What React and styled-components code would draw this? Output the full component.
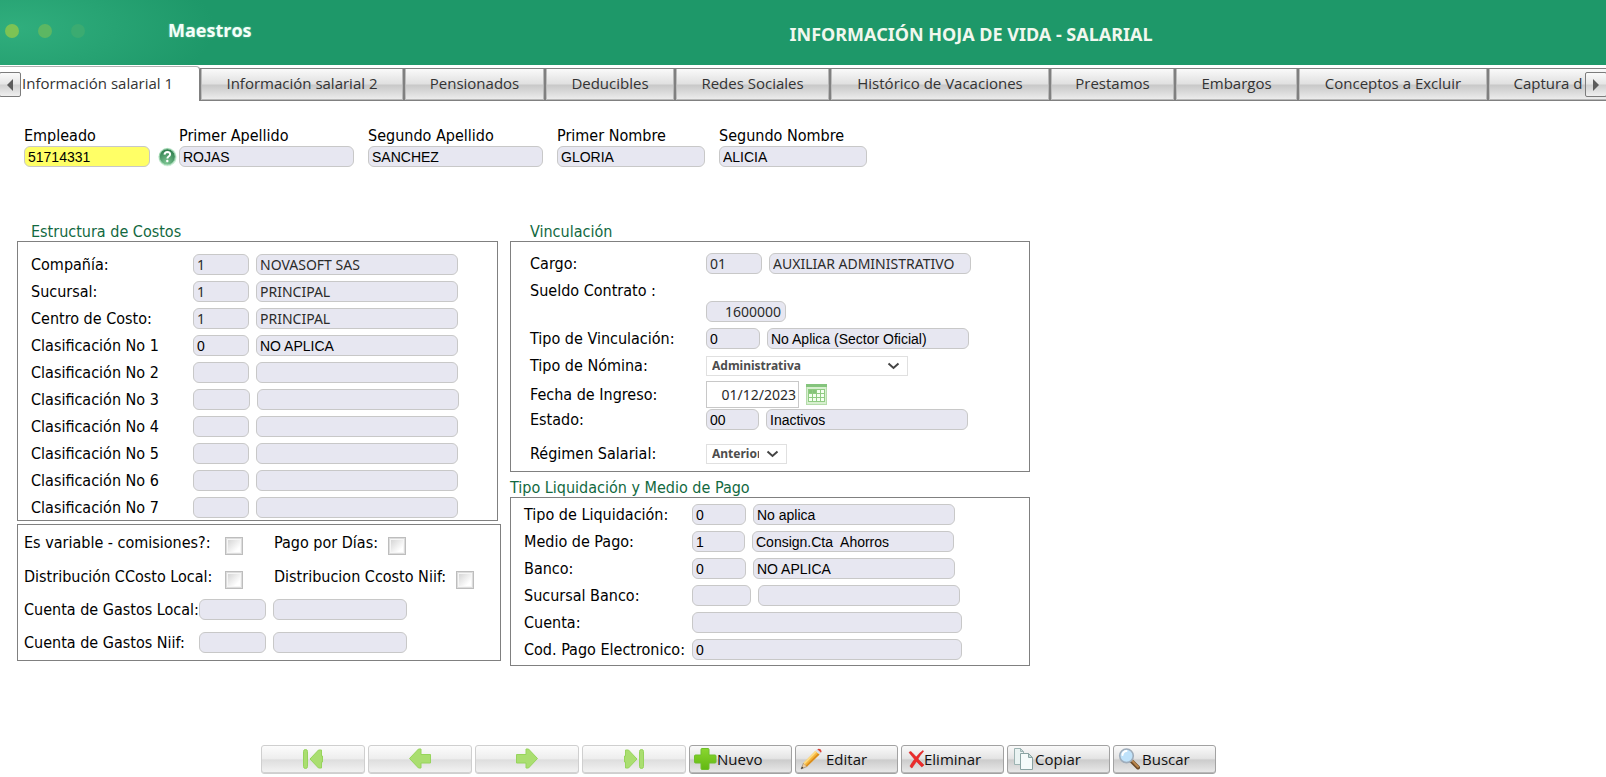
import * as React from 'react';
import styled, { createGlobalStyle } from 'styled-components';

const GlobalStyle = createGlobalStyle`
  *, *::before, *::after {
    box-sizing: border-box;
  }

  body {
    margin: 0;
    background: #ffffff;
    color: #000000;
    font-family: 'DejaVu Sans Condensed', 'Noto Sans', sans-serif;
    font-size: 16px;
    overflow-x: hidden;
  }
`;

const Header = styled.header`
  display: flex;
  align-items: center;
  height: 65px;
  padding-left: 5px;
  background:
    radial-gradient(ellipse 200px 75px at 15px 28px, #30ae7d 0%, rgba(48, 174, 125, 0) 100%),
    #1e9869;
`;

const Dots = styled.svg`
  display: block;
  flex: none;
  width: 163px;
  height: 65px;
`;

const Brand = styled.span`
  flex: 1;
  padding-bottom: 5px;
  font-family: 'Open Sans', sans-serif;
  font-size: 18px;
  font-weight: 700;
  color: #f4fff9;
  text-shadow: 0 0 2px rgba(255, 255, 255, 0.4);
`;

const PageTitle = styled.h1`
  flex: 0 0 51%;
  margin: 0;
  padding-top: 3px;
  font-family: 'Noto Sans', sans-serif;
  font-size: 18px;
  line-height: 24px;
  color: #f1f7ee;
`;

const TabStrip = styled.nav`
  position: relative;
  display: flex;
  align-items: flex-end;
  height: 36px;
  overflow: hidden;
`;

const Tab = styled.button`
  flex: none;
  width: ${(props) => props.$width}px;
  height: ${(props) => (props.$active ? 35 : 33)}px;
  padding: ${(props) => (props.$active ? '0 0 2px 22px' : '0 0 4px')};
  border: ${(props) => (props.$active ? '0' : '1px solid #808080')};
  border-top: 1px solid ${(props) => (props.$active ? '#b0b0b0' : '#808080')};
  border-right: 1px solid #808080;
  border-radius: ${(props) => (props.$active ? '0 4px 0 0' : '0')};
  background: ${(props) =>
    props.$active ? '#ffffff' : 'linear-gradient(#fafafa 0%, #e0e0e0 48%, #c8c8c8 52%, #eeeeee 100%)'};
  box-shadow: ${(props) => (props.$active ? 'none' : 'inset 1px 0 0 #bdbdbd, inset -1px -1px 0 #b8b8b8')};
  font-family: 'Open Sans', sans-serif;
  font-size: 15px;
  color: #333333;
  text-align: ${(props) => (props.$active ? 'left' : 'center')};
  white-space: nowrap;
`;

const ScrollButton = styled.button`
  position: absolute;
  top: 7px;
  ${(props) => props.$side}: -1px;
  display: flex;
  align-items: center;
  justify-content: center;
  width: 22px;
  height: 25px;
  padding: 0;
  border: 1px solid #7c7c7c;
  border-radius: 2px;
  background: linear-gradient(#fafafa 0%, #e6e6e6 48%, #d0d0d0 52%, #efefef 100%);
`;

const Content = styled.main`
  padding: 24px 16px 0 17px;
`;

const EmployeeRow = styled.section`
  display: flex;
  flex-wrap: wrap;
  gap: 14px;
  padding-left: 7px;
`;

const EmployeeField = styled.div`
  flex: 0 1 ${(props) => props.$width}px;
`;

const KeyField = styled.div`
  flex: none;
  margin-right: -12px;
`;

const FieldLine = styled.div`
  display: flex;
  align-items: center;
  gap: 8px;
`;

const Label = styled.label`
  display: block;
  line-height: 21px;
  white-space: nowrap;
`;

const Input = styled.input`
  display: block;
  flex: 0 1 ${(props) => props.$width}px;
  width: ${(props) => (props.$width ? `${props.$width}px` : '100%')};
  min-width: 0;
  height: 21px;
  padding: ${(props) => (props.$plain ? '0 4px 1px 3px' : '1px 4px 0 3px')};
  border: 1px solid #c8c8c8;
  border-radius: 6px;
  background: ${(props) => (props.$highlight ? '#ffff66' : '#e7e7f1')};
  font-family: ${(props) => (props.$plain ? "'Noto Sans'" : "'Liberation Sans'")}, sans-serif;
  font-size: 14px;
  color: ${(props) => (props.$plain ? '#2b2b2b' : '#000000')};
  text-align: ${(props) => props.$align || 'left'};
  outline: none;
`;

const DateInput = styled(Input)`
  height: 27px;
  padding: 0 2px 0 0;
  border-radius: 0;
  background: #ffffff;
`;

const Columns = styled.div`
  display: flex;
  flex-wrap: wrap;
  align-items: flex-start;
  gap: 9px;
  margin-top: 52px;
`;

const Column = styled.div`
  flex: 0 1 ${(props) => props.$width}px;
  min-width: 0;
`;

const SectionTitle = styled.h2`
  margin: 0;
  padding-left: ${(props) => props.$indent}px;
  padding-top: ${(props) => props.$gap || 4}px;
  font-size: 16px;
  font-weight: 400;
  line-height: 18px;
  color: #12693f;
`;

const Panel = styled.section`
  display: flex;
  flex-direction: column;
  gap: ${(props) => props.$gap || 0}px;
  margin-right: ${(props) => props.$inset || 0}px;
  padding: ${(props) => props.$padding};
  border: 1px solid #808080;
`;

const CostPanel = styled(Panel)`
  margin-top: 3px;
`;

const Row = styled.div`
  display: flex;
  align-items: center;
  gap: 7px;
  min-height: ${(props) => props.$height || 21}px;
  margin-top: ${(props) => props.$top || 0}px;

  > label:first-child {
    flex: none;
    width: ${(props) => props.$label}px;
    margin-right: -7px;
  }
`;

const SalaryRow = styled(Row)`
  align-items: flex-start;
  padding-top: 3px;

  > input {
    margin-top: 21px;
  }
`;

const CheckGroup = styled.div`
  display: flex;
  align-items: center;
  gap: 10px;
  margin-left: 24px;
`;

const Checkbox = styled.input.attrs({ type: 'checkbox' })`
  flex: none;
  appearance: none;
  width: 18px;
  height: 18px;
  margin: 8px 0 0;
  border: 1px solid #bdbdbd;
  outline: 1px solid #dcdcdc;
  outline-offset: -2px;
  background: linear-gradient(135deg, #d6d6d6, #ffffff 80%) center / 12px 12px no-repeat #f6f6f6;
`;

const SelectBox = styled.div`
  position: relative;
  flex: 0 1 ${(props) => props.$width}px;
`;

const Select = styled.select`
  display: block;
  width: 100%;
  height: 20px;
  padding: 0 ${(props) => props.$end}px 0 5px;
  border: 1px solid #e0e0e0;
  border-radius: 0;
  appearance: none;
  background: #ffffff;
  font-family: 'Noto Sans', sans-serif;
  font-size: 12px;
  font-weight: 700;
  line-height: 18px;
  color: #4d4d4d;
`;

const Chevron = styled.svg`
  position: absolute;
  top: 6px;
  right: 8px;
  width: 13px;
  height: 8px;
  pointer-events: none;
`;

const IconButton = styled.button`
  display: flex;
  flex: none;
  padding: 0;
  border: 0;
  background: none;
`;

const Toolbar = styled.footer`
  display: flex;
  flex-wrap: wrap;
  gap: 3px;
  margin-top: 79px;
  padding: 0 0 3px 244px;
`;

const ToolButton = styled.button`
  display: flex;
  align-items: center;
  justify-content: ${(props) => (props.disabled ? 'center' : 'flex-start')};
  width: ${(props) => (props.disabled ? 104 : 103)}px;
  height: 29px;
  padding: 0 4px 1px;
  border: 1px solid ${(props) => (props.disabled ? '#cfcfcf' : '#a2a2a2')};
  border-radius: 3px;
  background: ${(props) =>
    props.disabled
      ? 'linear-gradient(#fcfcfc 0%, #eeeeee 46%, #dedede 52%, #f4f4f4 100%)'
      : 'linear-gradient(#fafafa 0%, #e4e4e4 46%, #cccccc 52%, #eaeaea 100%)'};
  box-shadow: inset 0 -1px 0 ${(props) => (props.disabled ? '#d2d2d2' : '#b8b8b8')};
  font-family: 'Open Sans', sans-serif;
  font-size: 15px;
  color: #111111;

  svg {
    flex: none;
  }
`;

const tabs = [
  { text: 'Información salarial 1', width: 200, active: true },
  { text: 'Información salarial 2', width: 204 },
  { text: 'Pensionados', width: 141 },
  { text: 'Deducibles', width: 130 },
  { text: 'Redes Sociales', width: 155 },
  { text: 'Histórico de Vacaciones', width: 220 },
  { text: 'Prestamos', width: 125 },
  { text: 'Embargos', width: 123 },
  { text: 'Conceptos a Excluir', width: 190 },
  { text: 'Captura d', width: 120 },
];

const names = [
  { id: 'apellido1', label: 'Primer Apellido', value: 'ROJAS', width: 175 },
  { id: 'apellido2', label: 'Segundo Apellido', value: 'SANCHEZ', width: 175 },
  { id: 'nombre1', label: 'Primer Nombre', value: 'GLORIA', width: 148 },
  { id: 'nombre2', label: 'Segundo Nombre', value: 'ALICIA', width: 148 },
];

const costs = [
  { id: 'compania', label: 'Compañía:', code: '1', name: 'NOVASOFT SAS', plain: true },
  { id: 'sucursal', label: 'Sucursal:', code: '1', name: 'PRINCIPAL', plain: true },
  { id: 'centro', label: 'Centro de Costo:', code: '1', name: 'PRINCIPAL', plain: true },
  { id: 'clasif1', label: 'Clasificación No 1', code: '0', name: 'NO APLICA' },
  { id: 'clasif2', label: 'Clasificación No 2' },
  { id: 'clasif3', label: 'Clasificación No 3', codeWidth: 57 },
  { id: 'clasif4', label: 'Clasificación No 4' },
  { id: 'clasif5', label: 'Clasificación No 5' },
  { id: 'clasif6', label: 'Clasificación No 6' },
  { id: 'clasif7', label: 'Clasificación No 7' },
];

const payments = [
  { id: 'liquidacion', label: 'Tipo de Liquidación:', code: '0', name: 'No aplica', codeWidth: 54 },
  { id: 'medio', label: 'Medio de Pago:', code: '1', name: 'Consign.Cta  Ahorros', codeWidth: 53 },
  { id: 'banco', label: 'Banco:', code: '0', name: 'NO APLICA', codeWidth: 54 },
  { id: 'sucbanco', label: 'Sucursal Banco:', codeWidth: 59 },
];

function CodeFields({ id, label, code = '', name = '', codeWidth = 56, nameWidth = 202, plain }) {
  return (
    <>
      <Input id={id} $width={codeWidth} $plain={plain} defaultValue={code} readOnly />
      <Input aria-label={label} $width={nameWidth} $plain={plain} defaultValue={name} readOnly />
    </>
  );
}

function CodeRow({ labelWidth, height, ...field }) {
  return (
    <Row $label={labelWidth} $height={height}>
      <Label htmlFor={field.id}>{field.label}</Label>
      <CodeFields {...field} />
    </Row>
  );
}

function Dropdown({ id, width, end, option }) {
  return (
    <SelectBox $width={width}>
      <Select id={id} $end={end}>
        <option>{option}</option>
      </Select>
      <Chevron viewBox="0 0 13 8">
        <path d="M1.5 1.5 L6.5 6 L11.5 1.5" fill="none" stroke="#444444" strokeWidth="2" />
      </Chevron>
    </SelectBox>
  );
}

function HelpIcon() {
  return (
    <svg width="19" height="20" viewBox="0 0 19 20">
      <defs>
        <radialGradient id="help" cx="0.45" cy="0.85" r="0.8">
          <stop offset="0" stopColor="#7cc592" />
          <stop offset="1" stopColor="#2f7d4d" />
        </radialGradient>
      </defs>
      <circle cx="9.5" cy="10" r="9.2" fill="#cfeed8" />
      <circle cx="9.3" cy="9.8" r="8" fill="url(#help)" stroke="#9ad3ac" />
      <path
        d="M6.5 7.6q.3-2.7 2.9-2.7 2.7.1 2.7 2.3 0 1.4-1.500 2.3-1.2.8-1.2 2"
        fill="none"
        stroke="#ffffff"
        strokeWidth="2"
      />
      <circle cx="9.3" cy="14" r="1.2" fill="#ffffff" />
    </svg>
  );
}

function CalendarIcon() {
  return (
    <svg width="21" height="21" viewBox="0 0 21 21">
      <rect x="0.5" y="0.5" width="20" height="20" fill="#d7efcf" stroke="#b4dcaa" />
      <rect x="0" y="0" width="21" height="3" fill="#84c47c" />
      <rect x="2" y="5" width="17" height="13" fill="#8fcb82" />
      {[6, 10, 14].map((y) =>
        [3, 7, 11, 15].map((x) => (
          <rect key={`${x}-${y}`} x={x} y={y} width="3" height="3" fill={y === 6 && x < 8 ? '#84c478' : '#f4fff0'} />
        ))
      )}
    </svg>
  );
}

function EdgeArrow({ flip }) {
  return (
    <svg width="22" height="22" viewBox="0 0 22 22">
      <g
        transform={flip ? 'matrix(-1 0 0 1 22 0)' : undefined}
        fill="#aade70"
        stroke="#97d45c"
        strokeLinejoin="round"
      >
        <rect x="1.5" y="1.5" width="4" height="19" rx="2" />
        <path d="M8 11 L16.5 2 H19.5 V8 H20.5 V14 H19.5 V20 H16.5 Z" />
      </g>
    </svg>
  );
}

function StepArrow({ flip }) {
  return (
    <svg width="22" height="22" viewBox="0 0 22 22">
      <path
        transform={flip ? 'matrix(-1 0 0 1 22 0)' : undefined}
        d="M0.5 10.5 L9.5 1 H12 V6.5 H21.5 V15 H12 V20 H9.5 Z"
        fill="#aade70"
        stroke="#97d45c"
        strokeLinejoin="round"
      />
    </svg>
  );
}

function PlusIcon() {
  return (
    <svg width="23" height="22" viewBox="0 0 23 22">
      <defs>
        <linearGradient id="plus" x1="0" y1="0" x2="0" y2="1">
          <stop offset="0" stopColor="#8ad62f" />
          <stop offset="1" stopColor="#62b812" />
        </linearGradient>
      </defs>
      <path
        d="M8 0.5h6q1 0 1 1V7h6q1 0 1 1v6q0 1-1 1h-6v5.5q0 1-1 1H8q-1 0-1-1V15H1.5q-1 0-1-1V8q0-1 1-1H7V1.5q0-1 1-1z"
        fill="url(#plus)"
        stroke="#6fbf2c"
      />
    </svg>
  );
}

function PencilIcon() {
  return (
    <svg width="26" height="22" viewBox="0 0 26 22">
      <path d="M1 21 L3.5 15 L7 18.5 Z" fill="#f0cfa0" stroke="#8a7a68" strokeWidth="0.6" />
      <path d="M1 21 L2 18.6 L3.5 20 Z" fill="#333333" />
      <path d="M3.5 15 L15.5 2.8 L19.5 6.5 L7 18.5 Z" fill="#f6b63c" />
      <path d="M3.5 15 L15.5 2.8 L16.8 4 L4.7 16.3 Z" fill="#fddc86" />
      <path d="M5.9 17.4 L18.2 5.3 L19.5 6.5 L7 18.5 Z" fill="#d98c1c" />
      <path d="M15.5 2.8 L17.3 1.2 L21 4.8 L19.5 6.5 Z" fill="#d8dde4" />
      <path d="M17.3 1.2 Q18.8 0 20.8 1.4 Q22.3 3.3 21 4.8 Z" fill="#da4436" />
    </svg>
  );
}

function CrossIcon() {
  return (
    <svg width="18" height="22" viewBox="0 0 18 22">
      <path
        d="M3 4.5 Q4.5 2.5 6 4.5 L10.3 9 Q13 5 17 2.5 L17.5 3.5 Q14 7 12 11 L18 17 L15.8 19 L10.5 13.5 Q8 17 6 20 Q4.5 19.5 4 18 Q6 14.5 8.5 11.3 Z"
        fill="#ec2b2b"
        stroke="#d11d1d"
        strokeWidth="0.5"
      />
    </svg>
  );
}

function CopyIcon() {
  return (
    <svg width="23" height="22" viewBox="0 0 23 22">
      <path d="M2.5 0.5h6l3 3v13h-9z" fill="#eaf3f2" stroke="#9db3b2" />
      <path d="M8.5 0.5v3h3z" fill="#c6d9d7" stroke="#9db3b2" />
      <path d="M8.5 5.5h8l4 4v12h-12z" fill="#f5fbfa" stroke="#8aa3a2" />
      <path d="M16.5 5.5v4h4z" fill="#c6d9d7" stroke="#8aa3a2" />
    </svg>
  );
}

function SearchIcon() {
  return (
    <svg width="24" height="22" viewBox="0 0 24 22">
      <path d="M13 12.5 L20 19.5" stroke="#6c4a28" strokeWidth="4" strokeLinecap="round" />
      <path d="M14 12.5 L20 18.8" stroke="#b9854c" strokeWidth="2" strokeLinecap="round" />
      <circle cx="8.5" cy="7.8" r="6.8" fill="#bfe2fa" stroke="#9fadbb" strokeWidth="1.6" />
      <path d="M4.5 7a4 4 0 0 1 4-4" fill="none" stroke="#ffffff" strokeWidth="2" strokeLinecap="round" />
    </svg>
  );
}

const navButtons = [
  { id: 'Primero', icon: <EdgeArrow /> },
  { id: 'Anterior', icon: <StepArrow /> },
  { id: 'Siguiente', icon: <StepArrow flip /> },
  { id: 'Último', icon: <EdgeArrow flip /> },
];

const actions = [
  { text: 'Nuevo', icon: <PlusIcon /> },
  { text: 'Editar', icon: <PencilIcon /> },
  { text: 'Eliminar', icon: <CrossIcon /> },
  { text: 'Copiar', icon: <CopyIcon /> },
  { text: 'Buscar', icon: <SearchIcon /> },
];

export default function App() {
  return (
    <>
      <GlobalStyle />
      <Header>
        <Dots viewBox="0 0 163 65">
          <circle cx="7" cy="31" r="7" fill="#7cc354" />
          <circle cx="40" cy="31" r="7" fill="#5cb763" />
          <circle cx="73" cy="31" r="7" fill="#3bab71" />
        </Dots>
        <Brand>Maestros</Brand>
        <PageTitle>INFORMACIÓN HOJA DE VIDA - SALARIAL</PageTitle>
      </Header>

      <TabStrip>
        {tabs.map((tab) => (
          <Tab key={tab.text} type="button" $width={tab.width} $active={tab.active}>
            {tab.text}
          </Tab>
        ))}
        <ScrollButton type="button" $side="left" aria-label="Pestañas anteriores">
          <svg width="6" height="12" viewBox="0 0 6 12">
            <path d="M6 0 V12 L0 6 Z" fill="#5c5c5c" />
          </svg>
        </ScrollButton>
        <ScrollButton type="button" $side="right" aria-label="Pestañas siguientes">
          <svg width="6" height="12" viewBox="0 0 6 12">
            <path d="M0 0 V12 L6 6 Z" fill="#5c5c5c" />
          </svg>
        </ScrollButton>
      </TabStrip>

      <Content>
        <EmployeeRow>
          <KeyField>
            <Label htmlFor="empleado">Empleado</Label>
            <FieldLine>
              <Input id="empleado" $width={126} $highlight defaultValue="51714331" />
              <IconButton type="button" aria-label="Ayuda">
                <HelpIcon />
              </IconButton>
            </FieldLine>
          </KeyField>
          {names.map((field) => (
            <EmployeeField key={field.id} $width={field.width}>
              <Label htmlFor={field.id}>{field.label}</Label>
              <Input id={field.id} defaultValue={field.value} readOnly />
            </EmployeeField>
          ))}
        </EmployeeRow>

        <Columns>
          <Column $width={484}>
            <SectionTitle $indent={14}>Estructura de Costos</SectionTitle>
            <Panel $gap={6} $inset={3} $padding="12px 13px 2px">
              {costs.map((field) => (
                <CodeRow key={field.id} labelWidth={162} {...field} />
              ))}
            </Panel>
            <CostPanel $padding="0 6px 1px">
              <Row $label={201} $height={34}>
                <Label htmlFor="variable">Es variable - comisiones?:</Label>
                <Checkbox id="variable" />
                <CheckGroup>
                  <Label htmlFor="dias">Pago por Días:</Label>
                  <Checkbox id="dias" />
                </CheckGroup>
              </Row>
              <Row $label={201} $height={34}>
                <Label htmlFor="distlocal">Distribución CCosto Local:</Label>
                <Checkbox id="distlocal" />
                <CheckGroup>
                  <Label htmlFor="distniif">Distribucion Ccosto Niif:</Label>
                  <Checkbox id="distniif" />
                </CheckGroup>
              </Row>
              <CodeRow id="gastoslocal" label="Cuenta de Gastos Local:" labelWidth={175} height={33} codeWidth={67} nameWidth={134} />
              <CodeRow id="gastosniif" label="Cuenta de Gastos Niif:" labelWidth={175} height={33} codeWidth={67} nameWidth={134} />
            </CostPanel>
          </Column>

          <Column $width={520}>
            <SectionTitle $indent={20}>Vinculación</SectionTitle>
            <Panel $padding="8px 19px 7px">
              <CodeRow id="cargo" label="Cargo:" labelWidth={176} height={27} code="01" name="AUXILIAR ADMINISTRATIVO" plain />
              <SalaryRow $label={176} $height={48}>
                <Label htmlFor="sueldo">Sueldo Contrato :</Label>
                <Input id="sueldo" $width={80} $plain $align="right" defaultValue="1600000" readOnly />
              </SalaryRow>
              <CodeRow id="tipovinc" label="Tipo de Vinculación:" labelWidth={176} height={27} code="0" name="No Aplica (Sector Oficial)" codeWidth={54} />
              <Row $label={176} $height={27}>
                <Label htmlFor="nomina">Tipo de Nómina:</Label>
                <Dropdown id="nomina" width={202} end={22} option="Administrativa" />
              </Row>
              <Row $label={176} $height={30}>
                <Label htmlFor="ingreso">Fecha de Ingreso:</Label>
                <DateInput id="ingreso" $width={93} $plain $align="right" defaultValue="01/12/2023" />
                <IconButton type="button" aria-label="Calendario">
                  <CalendarIcon />
                </IconButton>
              </Row>
              <CodeRow id="estado" label="Estado:" labelWidth={176} code="00" name="Inactivos" codeWidth={53} />
              <Row $label={176} $top={13}>
                <Label htmlFor="regimen">Régimen Salarial:</Label>
                <Dropdown id="regimen" width={81} end={27} option="Anterior" />
              </Row>
            </Panel>

            <SectionTitle $indent={0} $gap={7}>Tipo Liquidación y Medio de Pago</SectionTitle>
            <Panel $gap={6} $padding="6px 13px 5px">
              {payments.map((field) => (
                <CodeRow key={field.id} labelWidth={168} {...field} />
              ))}
              <Row $label={168}>
                <Label htmlFor="cuenta">Cuenta:</Label>
                <Input id="cuenta" $width={270} readOnly />
              </Row>
              <Row $label={168}>
                <Label htmlFor="codpago">Cod. Pago Electronico:</Label>
                <Input id="codpago" $width={270} defaultValue="0" readOnly />
              </Row>
            </Panel>
          </Column>
        </Columns>

        <Toolbar>
          {navButtons.map((button) => (
            <ToolButton key={button.id} type="button" aria-label={button.id} disabled>
              {button.icon}
            </ToolButton>
          ))}
          {actions.map((action) => (
            <ToolButton key={action.text} type="button">
              {action.icon}
              {action.text}
            </ToolButton>
          ))}
        </Toolbar>
      </Content>
    </>
  );
}
